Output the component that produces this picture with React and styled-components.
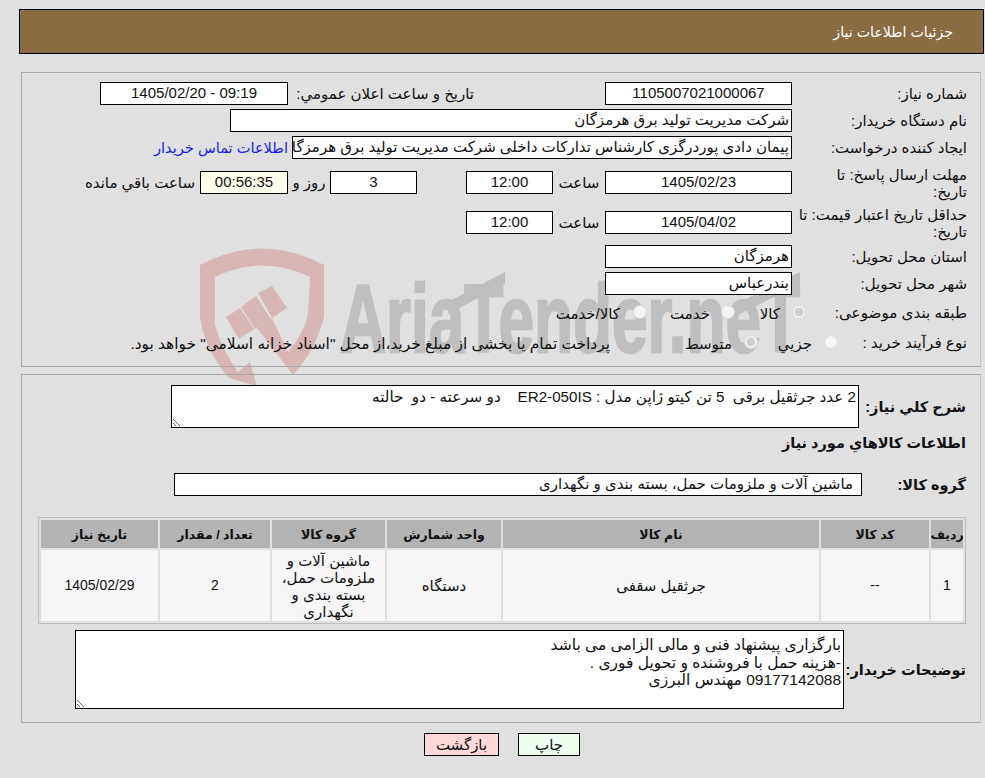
import React from 'react';
import styled, { createGlobalStyle } from 'styled-components';

const Global = createGlobalStyle`
  html, body { margin: 0; padding: 0; background: #e0e0e0; }
  body { font-family: "Liberation Sans", "DejaVu Sans", sans-serif; font-size: 15px; color: #111; }
  * { box-sizing: border-box; }
`;

const Page = styled.div`
  position: relative;
  width: 985px;
  height: 778px;
  overflow: hidden;
  direction: rtl;
  padding: 9px 1px 0 19px;
`;

const Watermark = styled.svg`
  position: absolute;
  left: 0;
  top: 0;
  width: 985px;
  height: 778px;
`;

const Content = styled.div`
  position: relative;
  display: flex;
  flex-direction: column;
`;

const Header = styled.div`
  height: 45px;
  background: #8b6b42;
  border: 1px solid #000;
  color: #fff;
  font-size: 14.2px;
  display: flex;
  align-items: center;
  padding-right: 30px;
`;

const Panel = styled.div`
  margin: ${p => p.$top}px 3px 0 2px;
  height: ${p => p.$height}px;
  border: 1px solid #a8a8a8;
  border-right-color: #c4c4c4;
  padding: ${p => p.$pad}px ${p => p.$side}px 0 0;
  display: flex;
  flex-direction: column;
`;

const Row = styled.div`
  display: flex;
  align-items: center;
  height: ${p => p.$h || 23}px;
  margin-top: ${p => p.$mt || 0}px;
  margin-bottom: ${p => p.$mb || 0}px;
`;

const RowLabel = styled.div`
  width: 175px;
  flex: none;
  font-size: 15px;
  line-height: 17px;
  padding-left: 2px;
`;

const RadioLabel = styled.div`
  width: ${p => p.$w}px;
  flex: none;
  font-size: 15.2px;
  line-height: 17px;
  margin-bottom: 4px;
  white-space: nowrap;
`;

const Field = styled.div`
  flex: none;
  width: ${p => p.$w}px;
  height: 23px;
  line-height: 20px;
  background: ${p => p.$bg || '#fff'};
  border: 1px solid #000;
  text-align: ${p => (p.$start ? 'right' : 'center')};
  padding: 0 ${p => p.$pad || 2}px;
  font-size: 15px;
  overflow: hidden;
  white-space: nowrap;
`;

const Inline = styled.div`
  flex: none;
  width: ${p => p.$w}px;
  text-align: ${p => p.$align || 'center'};
  padding-right: ${p => p.$inset || 0}px;
  font-size: 15px;
  white-space: nowrap;
`;

const ContactLink = styled.a`
  color: #1a1aff;
  font-size: 14.6px;
  margin-right: 4px;
  white-space: nowrap;
  text-decoration: none;
`;

const RadioRow = styled.div`
  display: flex;
  align-items: center;
  height: 30px;
`;

const Radio = styled.input.attrs({ type: 'radio', disabled: true })`
  appearance: none;
  flex: none;
  width: 14px;
  height: 14px;
  margin: 0 0 4px ${p => p.$gap || 12}px;
  border-radius: 50%;
  background: ${p => (p.$on ? 'radial-gradient(circle, #cfcfcf 0 4px, #f2f2f2 4.6px)' : '#f4f4f4')};
  border: 1px solid #dcdcdc;
`;

const Choice = styled.span`
  flex: none;
  width: ${p => p.$w}px;
  font-size: ${p => p.$fs || 15}px;
  white-space: nowrap;
`;

const BoldLabel = styled.div`
  flex: none;
  width: ${p => p.$w}px;
  font-size: 14.5px;
  font-weight: 700;
  white-space: nowrap;
`;

const Area = styled.textarea.attrs({ readOnly: true })`
  flex: none;
  display: block;
  width: ${p => p.$w}px;
  height: ${p => p.$h}px;
  border: 1px solid #000;
  border-radius: 0;
  background: #fff;
  color: #111;
  font: ${p => p.$fs}px/17.5px "Liberation Sans", "DejaVu Sans", sans-serif;
  padding: ${p => p.$top}px 2px 2px;
  margin: 0;
  outline: none;
`;

const Grid = styled.div`
  display: grid;
  grid-template-columns: 32px 108px 316px 114px 113px 110px 117px;
  grid-template-rows: 28px 71px;
  gap: 2px;
  width: 928px;
  height: 107px;
  padding: 2px;
  border: 1px solid #bcbcbc;
  margin-top: 21px;
`;

const HeadCell = styled.div`
  background: #b3b3b3;
  font-weight: 700;
  font-size: 12.5px;
  display: flex;
  align-items: center;
  justify-content: center;
  white-space: nowrap;
`;

const Cell = styled.div`
  background: #f6f6f6;
  font-size: ${p => (p.$latin ? 14 : 15)}px;
  line-height: 17px;
  text-align: center;
  display: flex;
  align-items: center;
  justify-content: center;
  padding: 0 3px;
`;

const Actions = styled.div`
  display: flex;
  justify-content: center;
  gap: 19px;
  margin-top: 10px;
  padding-left: 1px;
`;

const Btn = styled.button`
  width: ${p => p.$w}px;
  height: 23px;
  background: ${p => p.$bg};
  border: 1px solid #000;
  border-radius: 0;
  color: #111;
  font: 15px "Liberation Sans", "DejaVu Sans", sans-serif;
  padding: 0;
`;

const heads = ['ردیف', 'کد کالا', 'نام کالا', 'واحد شمارش', 'گروه کالا', 'تعداد / مقدار', 'تاریخ نیاز'];
const cells = [
  { text: '1', latin: true },
  { text: '--', latin: true },
  { text: 'جرثقیل سقفی' },
  { text: 'دستگاه' },
  { text: 'ماشین آلات و ملزومات حمل، بسته بندی و نگهداری' },
  { text: '2', latin: true },
  { text: '1405/02/29', latin: true },
];
const notes = 'بارگزاری پیشنهاد فنی و مالی الزامی می باشد\n-هزینه حمل با فروشنده و تحویل فوری .\n09177142088 مهندس البرزی';

export default function App() {
  return (
    <Page>
      <Global />
      <Watermark viewBox="0 0 985 778" aria-hidden="true">
        <path fill="#d8b6b6" fillRule="evenodd" d="M200 265Q262 232 324 265L324 317Q316 350 293 375L257 328L272 318L288 352Q306 330 308 313L310 277Q262 254 215 277L215 325Q222 350 238 372L250 362L257 386L232 379L228 377Q205 350 200 317Z" />
        <path fill="#d8b6b6" d="M226 317L240 308L254 329L239 339ZM241 307L256 296L271 319L255 329ZM258 293L272 286L287 308L272 318Z" />
        <path fill="#bfbfbf" d="M448 302L505 272L505 284L448 314ZM738 303L800 272L800 284L738 315Z" />
        <text x="340" y="352" fill="#bfbfbf" stroke="#bfbfbf" strokeWidth="2.5" fontFamily="Liberation Sans" fontWeight="700" fontSize="97" textLength="460" lengthAdjust="spacingAndGlyphs" direction="ltr">AriaTender.neT</text>
      </Watermark>
      <Content>
        <Header>جزئیات اطلاعات نیاز</Header>
        <Panel $top={18} $height={295} $pad={9} $side={13}>
          <Row $mb={4}>
            <RowLabel>شماره نیاز:</RowLabel>
            <Field $w={187}>1105007021000067</Field>
            <Inline $w={131} />
            <Inline $w={186} $align="right">تاریخ و ساعت اعلان عمومي:</Inline>
            <Field $w={188}>09:19 - 1405/02/20</Field>
          </Row>
          <Row $mb={4}>
            <RowLabel>نام دستگاه خریدار:</RowLabel>
            <Field $w={562} $start>شرکت مدیریت تولید برق هرمزگان</Field>
          </Row>
          <Row $mb={7}>
            <RowLabel>ایجاد کننده درخواست:</RowLabel>
            <Field $w={500} $start>پیمان دادی پوردرگزی کارشناس تدارکات داخلی شرکت مدیریت تولید برق هرمزگان</Field>
            <ContactLink href="#">اطلاعات تماس خریدار</ContactLink>
          </Row>
          <Row $h={33} $mb={7}>
            <RowLabel>مهلت ارسال پاسخ: تا<br />تاریخ:</RowLabel>
            <Field $w={187}>1405/02/23</Field>
            <Inline $w={52}>ساعت</Inline>
            <Field $w={87}>12:00</Field>
            <Inline $w={49} />
            <Field $w={87}>3</Field>
            <Inline $w={42}>روز و</Inline>
            <Field $w={88} $bg="#ffffee">00:56:35</Field>
            <Inline $w={117} $align="right" $inset={5}>ساعت باقي مانده</Inline>
          </Row>
          <Row $h={33} $mb={6}>
            <RowLabel>حداقل تاریخ اعتبار قیمت: تا<br />تاریخ:</RowLabel>
            <Field $w={187}>1405/04/02</Field>
            <Inline $w={52}>ساعت</Inline>
            <Field $w={87}>12:00</Field>
          </Row>
          <Row $mb={4}>
            <RowLabel>استان محل تحویل:</RowLabel>
            <Field $w={187} $start>هرمزگان</Field>
          </Row>
          <Row $mb={4}>
            <RowLabel>شهر محل تحویل:</RowLabel>
            <Field $w={187} $start>بندرعباس</Field>
          </Row>
          <RadioRow>
            <RadioLabel $w={161}>طبقه بندی موضوعی:</RadioLabel>
            <Radio $on />
            <Choice $w={45}>کالا</Choice>
            <Radio $gap={11} />
            <Choice $w={63}>خدمت</Choice>
            <Radio $gap={13} />
            <Choice $w={70}>کالا/خدمت</Choice>
          </RadioRow>
          <RadioRow>
            <RadioLabel $w={129}>نوع فرآیند خرید :</RadioLabel>
            <Radio />
            <Choice $w={54}>جزیي</Choice>
            <Radio $on />
            <Choice $w={122}>متوسط</Choice>
            <Choice $w={490} $fs={15.4}>پرداخت تمام یا بخشی از مبلغ خرید،از محل "اسناد خزانه اسلامی" خواهد بود.</Choice>
          </RadioRow>
        </Panel>
        <Panel $top={7} $height={349} $pad={10} $side={14}>
          <Row $h={43}>
            <BoldLabel $w={107}>شرح كلي نياز:</BoldLabel>
            <Area $w={688} $h={43} $fs={15.2} $top={2} defaultValue="2 عدد جرثقیل برقی  5 تن کیتو ژاپن مدل : ER2-050IS    دو سرعته - دو  حالته" />
          </Row>
          <Row $h={30} $mb={15}>
            <BoldLabel $w={200}>اطلاعات كالاهاي مورد نياز</BoldLabel>
          </Row>
          <Row>
            <BoldLabel $w={104}>گروه کالا:</BoldLabel>
            <Field $w={688} $start $pad={8}>ماشین آلات و ملزومات حمل، بسته بندی و نگهداری</Field>
          </Row>
          <Grid>
            {heads.map(h => <HeadCell key={h}>{h}</HeadCell>)}
            {cells.map(c => <Cell key={c.text} $latin={c.latin}>{c.text}</Cell>)}
          </Grid>
          <Row $h={79} $mt={6}>
            <BoldLabel $w={122}>توضیحات خریدار:</BoldLabel>
            <Area $w={769} $h={79} $fs={15.5} $top={5} defaultValue={notes} />
          </Row>
        </Panel>
        <Actions>
          <Btn $w={62} $bg="#eeffee">چاپ</Btn>
          <Btn $w={75} $bg="#ffd9d9">بازگشت</Btn>
        </Actions>
      </Content>
    </Page>
  );
}
